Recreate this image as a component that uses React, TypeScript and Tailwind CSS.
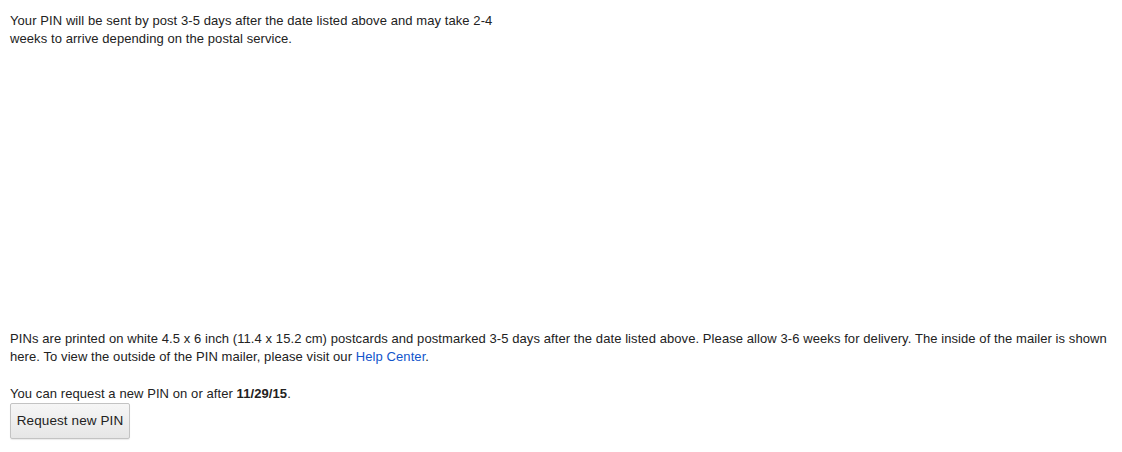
import React from 'react';

const App: React.FC = () => {
  return (
    <div className="bg-white min-h-[452px] px-[10px] pt-[12px] text-[13px] leading-[18px] tracking-[0.08px] text-[#222222] font-['Liberation_Sans',Arial,sans-serif]">
      <p className="w-[510px]">
        Your PIN will be sent by post 3-5 days after the date listed above and may take 2-4 weeks to arrive depending on the postal service.
      </p>

      {/* mailer image area */}
      <div className="h-[282px]"></div>

      <p>
        PINs are printed on white 4.5 x 6 inch (11.4 x 15.2 cm) postcards and postmarked 3-5 days after the date listed above. Please allow 3-6 weeks for delivery. The inside of the mailer is shown here. To view the outside of the PIN mailer, please visit our <a href="#" className="text-[#1155cc]">Help Center</a>.
      </p>

      <p className="mt-[19px]">
        You can request a new PIN on or after <b>11/29/15</b>.
      </p>
      <button className="h-[36px] w-[120px] border border-[#c3c3c3] rounded-[2px] bg-gradient-to-b from-[#f6f6f6] to-[#e6e6e6] text-[13.5px] tracking-[0.1px] text-[#222222] shadow-[0_1px_1px_rgba(0,0,0,0.08)]">
        Request new PIN
      </button>
    </div>
  );
};

export default App;
